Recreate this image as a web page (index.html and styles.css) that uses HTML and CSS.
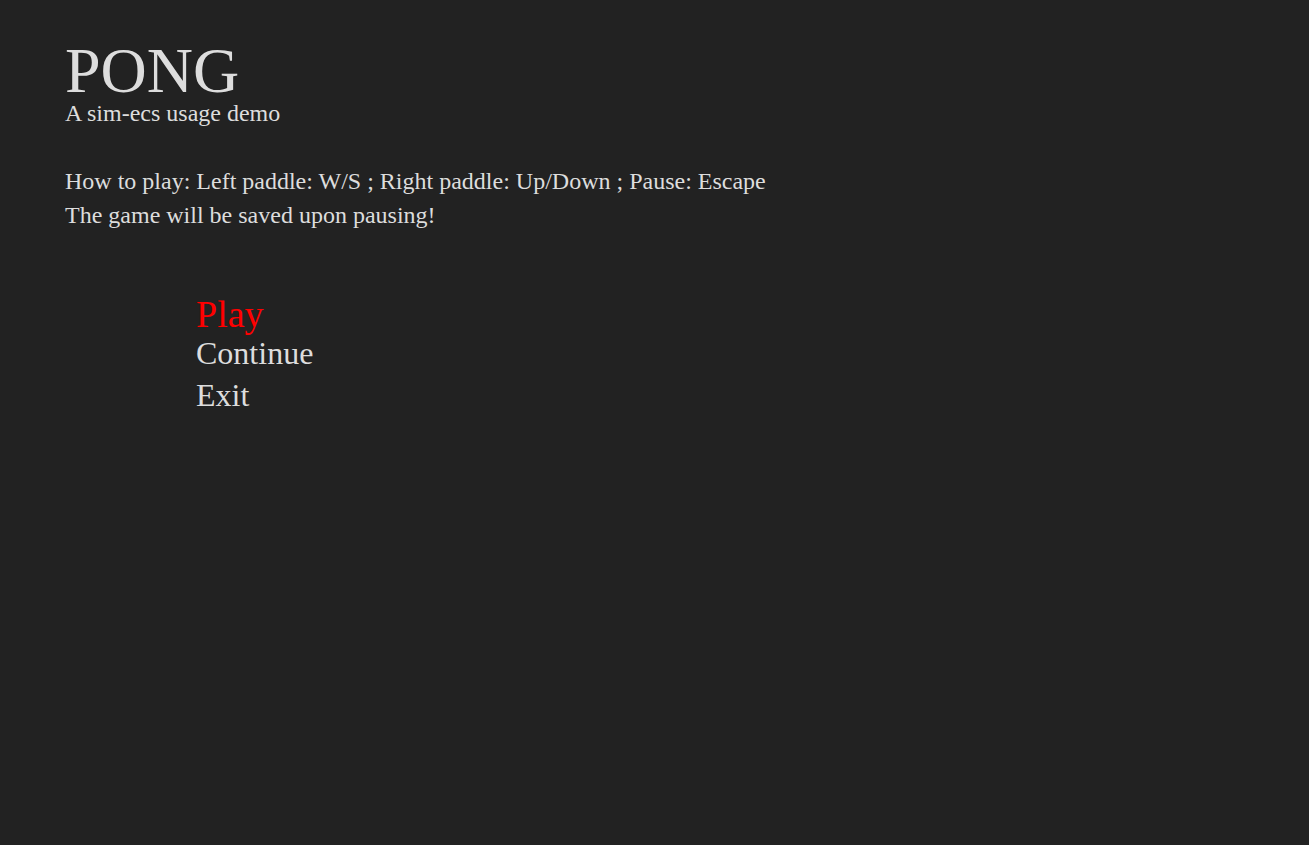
FILE: index.html
```html
<!DOCTYPE html>
<html>
<head>
<meta charset="utf-8">
<title>PONG</title>
<link rel="stylesheet" href="styles.css">
</head>
<body>
<main class="page">
  <header class="header">
    <h1 class="title">PONG</h1>
    <p class="subtitle">A sim-ecs usage demo</p>
  </header>
  <section class="help">
    <p class="help-line">How to play: Left paddle: W/S ; Right paddle: Up/Down ; Pause: Escape</p>
    <p class="help-line">The game will be saved upon pausing!</p>
  </section>
  <nav class="menu">
    <div class="menu-item active">Play</div>
    <div class="menu-item">Continue</div>
    <div class="menu-item">Exit</div>
  </nav>
</main>
</body>
</html>
```
FILE: styles.css
```css
html, body {
  margin: 0;
  padding: 0;
  background: #222222;
  height: 100%;
}
body {
  font-family: "Liberation Serif", "Times New Roman", serif;
  color: #dddddd;
}
.page {
  padding: 43px 0 0 65px;
}
.title {
  margin: 0;
  font-size: 64px;
  font-weight: normal;
  line-height: 56px;
}
.subtitle {
  margin: 0;
  font-size: 24px;
  line-height: 28px;
}
.help {
  margin-top: 37px;
}
.help-line {
  margin: 0;
  font-size: 24px;
  line-height: 34px;
}
.menu {
  margin-top: 64px;
  margin-left: 131px;
  display: flex;
  flex-direction: column;
  align-items: flex-start;
}
.menu-item {
  font-size: 32px;
  line-height: 42px;
}
.menu-item.active {
  font-size: 38px;
  line-height: 36px;
  color: #ff0000;
}
```
